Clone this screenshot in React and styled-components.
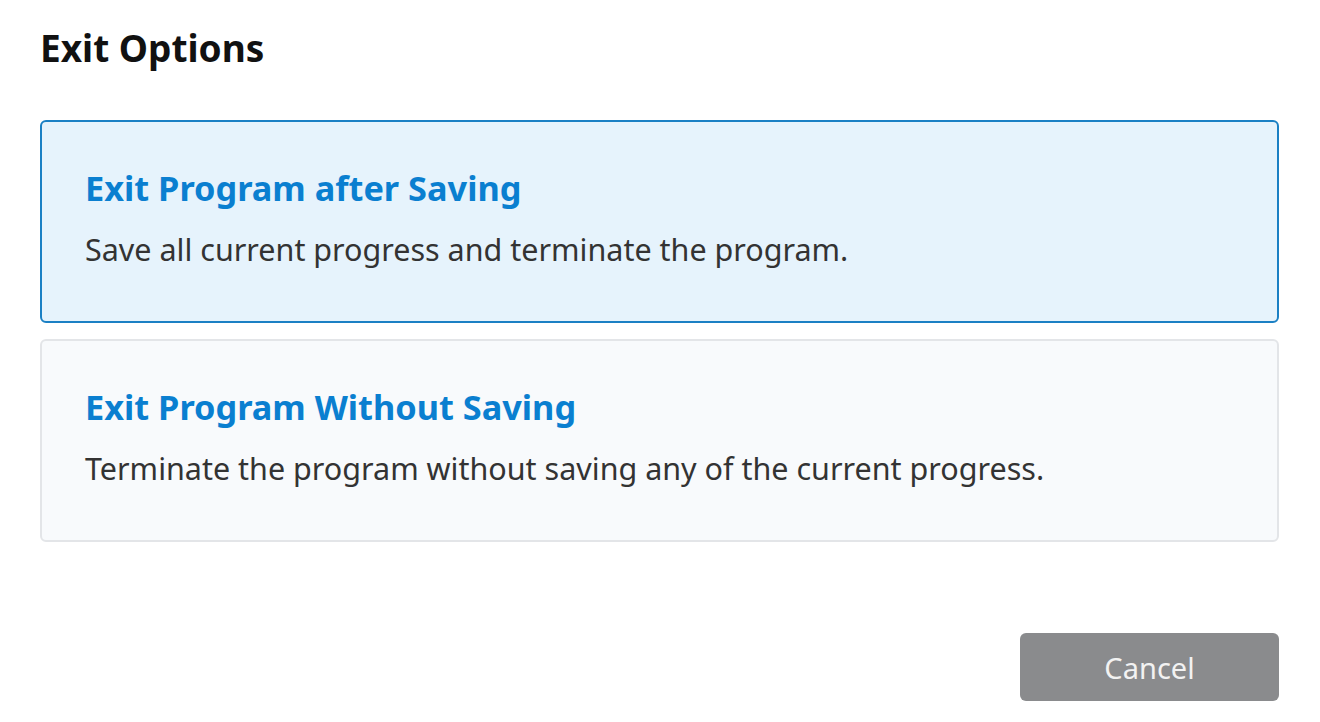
import React from "react";
import styled, { createGlobalStyle } from "styled-components";

const Global = createGlobalStyle`
  html, body { margin: 0; padding: 0; background: #ffffff; }
  body { font-family: "Noto Sans", "Open Sans", sans-serif; }
  * { box-sizing: border-box; }
`;

const Page = styled.div`
  width: 1320px;
  height: 722px;
  padding: 23px 41px 0 40px;
  display: flex;
  flex-direction: column;
`;

const Heading = styled.h1`
  margin: 0;
  font-size: 37px;
  line-height: 50px;
  font-weight: 700;
  color: #111111;
`;

const Options = styled.div`
  margin-top: 47px;
  display: flex;
  flex-direction: column;
  gap: 16px;
`;

const Card = styled.div`
  height: 203px;
  border-radius: 6px;
  border: 2px solid ${(p) => (p.$active ? "#1b80c4" : "#e3e5e8")};
  background: ${(p) => (p.$active ? "#e6f3fc" : "#f8fafc")};
  padding: 42px 44px 0 43px;
  display: flex;
  flex-direction: column;
  gap: 16px;
`;

const Title = styled.div`
  font-size: 34.3px;
  line-height: 48px;
  font-weight: 700;
  color: #0a7fd0;
`;

const Desc = styled.div`
  font-size: 30.5px;
  line-height: 42px;
  color: #333333;
`;

const Footer = styled.div`
  margin-top: auto;
  padding-bottom: 21px;
  display: flex;
  justify-content: flex-end;
`;

const Button = styled.button`
  width: 259px;
  height: 68px;
  border: none;
  border-radius: 6px;
  background: #8a8b8d;
  color: #f2f2f2;
  font-family: inherit;
  font-size: 29px;
`;

export default function App() {
  return (
    <>
      <Global />
      <Page>
        <Heading>Exit Options</Heading>
        <Options>
          <Card $active>
            <Title>Exit Program after Saving</Title>
            <Desc>Save all current progress and terminate the program.</Desc>
          </Card>
          <Card>
            <Title>Exit Program Without Saving</Title>
            <Desc>Terminate the program without saving any of the current progress.</Desc>
          </Card>
        </Options>
        <Footer>
          <Button>Cancel</Button>
        </Footer>
      </Page>
    </>
  );
}
